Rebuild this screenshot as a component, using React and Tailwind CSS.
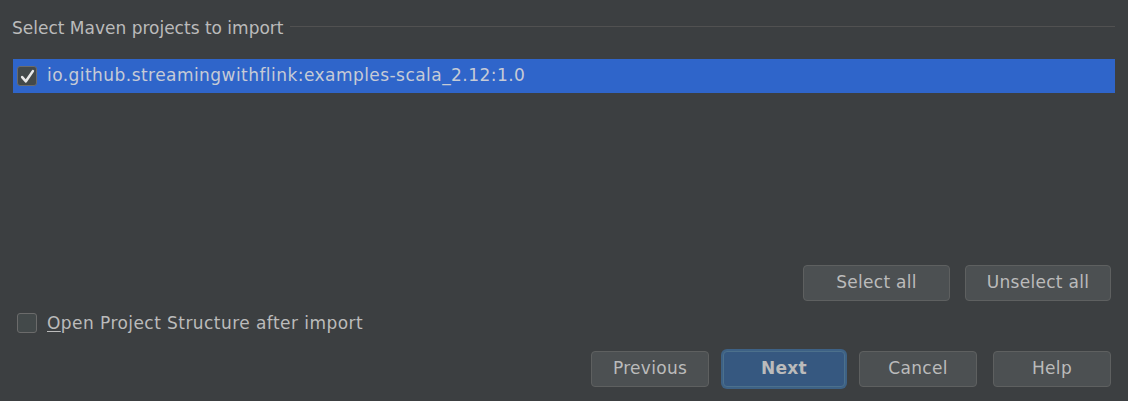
import React from 'react'

const Btn = ({ children, className = '', primary = false }) => (
    <button
        className={
            'h-[36px] rounded-[4px] border text-[17px] tracking-[0.3px] ' +
            (primary
                ? 'bg-[#365880] border-[#4c708c] text-[#bbbbbb] font-bold ring-2 ring-[#3d6185] ring-offset-0 '
                : 'bg-[#4c5052] border-[#5e6060] text-[#bbbbbb] ') +
            className
        }
    >
        {children}
    </button>
)

const App = () => {
    return (
        <div
            className="w-[1128px] h-[401px] bg-[#3c3f41] text-[#bbbbbb] flex flex-col"
            style={{ fontFamily: '"DejaVu Sans", sans-serif' }}
        >
            {/* title with separator */}
            <div className="flex items-center pl-[12px] pr-[13px] pt-[17px] text-[17px] leading-[22px]">
                <span className="text-[#bbbbbb]">Select Maven projects to import</span>
                <div className="flex-1 h-px bg-[#515151] ml-[6px] mt-[-4px]"></div>
            </div>

            {/* project list */}
            <div className="flex-1 px-[13px] pt-[20px]">
                <div className="h-[34px] w-[1102px] bg-[#2f65ca] flex items-center pl-[4px]">
                    <div className="w-[20px] h-[20px] rounded-[3px] border border-[#6b6b6b] bg-[#43494a] flex items-center justify-center">
                        <svg width="15" height="15" viewBox="0 0 14 14">
                            <path d="M2 7.5 L5.5 11.5 L12 2" fill="none" stroke="#e8e8e8" strokeWidth="2.4" strokeLinecap="round" strokeLinejoin="round" />
                        </svg>
                    </div>
                    <span className="ml-[10px] text-[17px] tracking-[0.45px] text-[#c6cbd6]">io.github.streamingwithflink:examples-scala_2.12:1.0</span>
                </div>
            </div>

            {/* select buttons */}
            <div className="flex justify-end gap-[15px] pr-[17px] mb-[10px]">
                <Btn className="w-[147px]">Select all</Btn>
                <Btn className="w-[146px]">Unselect all</Btn>
            </div>

            {/* open project structure */}
            <div className="flex items-center pl-[17px] mb-[15px]">
                <div className="w-[20px] h-[20px] rounded-[3px] border border-[#6b6b6b] bg-[#43494a]"></div>
                <span className="ml-[10px] text-[17px] tracking-[0.44px]"><span className="underline underline-offset-2">O</span>pen Project Structure after import</span>
            </div>

            {/* bottom buttons */}
            <div className="flex justify-end items-center pr-[17px] pb-[14px]">
                <Btn className="w-[118px]">Previous</Btn>
                <Btn primary className="w-[122px] ml-[14px]">Next</Btn>
                <Btn className="w-[118px] ml-[14px]">Cancel</Btn>
                <Btn className="w-[118px] ml-[16px]">Help</Btn>
            </div>
        </div>
    )
}

export default App
